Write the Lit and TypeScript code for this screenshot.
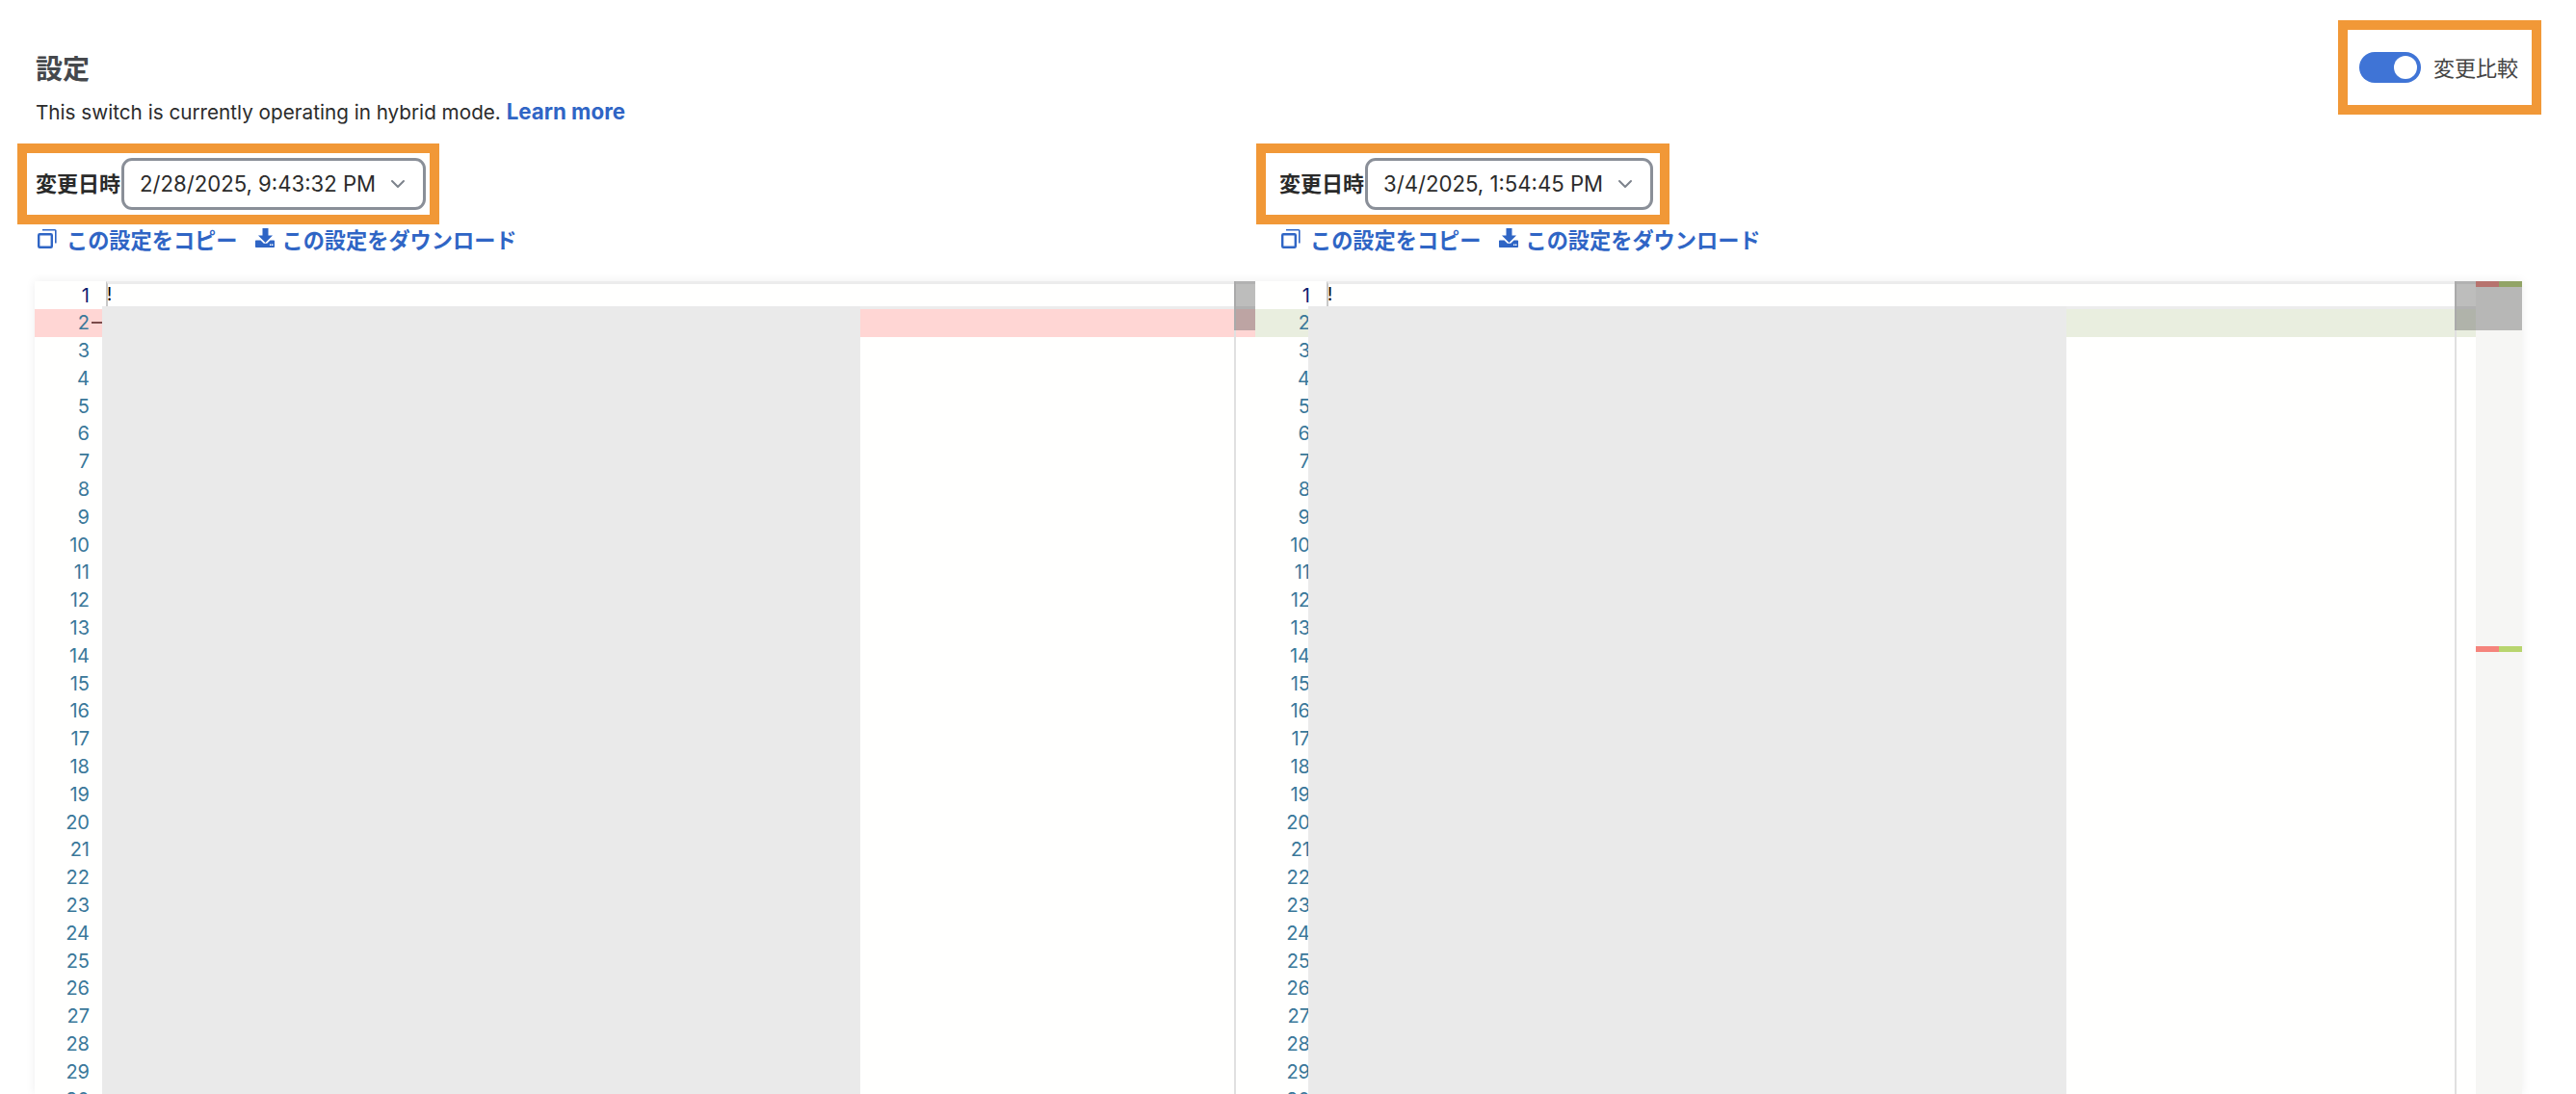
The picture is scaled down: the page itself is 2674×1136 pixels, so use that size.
import { LitElement, html, css, svg } from "lit";
import { customElement } from "lit/decorators.js";

const LINES = Array.from({ length: 30 }, (_, i) => i + 1);

const copyIcon = svg`<svg class="ico copy" width="20" height="20" viewBox="0 0 20 20" fill="none" stroke="currentColor">
  <rect x="1.2" y="5.2" width="13.6" height="13.6" rx="1" stroke-width="2.4"/>
  <path d="M5 .8h13a.8.8 0 0 1 .8.8v13" stroke-width="1.6"/>
</svg>`;

const downloadIcon = svg`<svg class="ico" width="20" height="20" viewBox="0 0 20 20" fill="currentColor">
  <path d="M7.500 0h6v7.500h4.500L10.500 15 3 7.500h4.500z"/>
  <path fill-rule="evenodd" d="M.8 12.500h4.700l3.300 3.300h3.400l3.300-3.300h3.700a.8.8 0 0 1 .8.8v5.900a.8.8 0 0 1-.8.8H.8a.8.8 0 0 1-.8-.8v-5.900a.8.8 0 0 1 .8-.8zM15 16.600h1.400V18H15zM17 16.600h1.400V18H17z"/>
</svg>`;

const chevron = svg`<svg class="chev" width="16" height="10" viewBox="0 0 16 10" fill="none" stroke="#7d838c" stroke-width="2" stroke-linecap="round" stroke-linejoin="round">
  <path d="M2 2l6 6 6-6"/>
</svg>`;

@customElement("app-root")
export class AppRoot extends LitElement {
  static styles = css`
    :host {
      display: block;
      height: 1136px;
      overflow: hidden;
      background: #fff;
      font-family: Inter, "Noto Sans CJK JP", sans-serif;
      color: #222;
    }
    .head {
      display: flex;
      justify-content: space-between;
      align-items: flex-start;
      padding: 21px 36px 0 37px;
      height: 149px;
      box-sizing: border-box;
    }
    .titles { display: flex; flex-direction: column; padding-top: 31px; }
    h1 {
      margin: 0;
      font-size: 28px;
      line-height: 40px;
      font-weight: 600;
      color: #45484c;
    }
    .sub { margin: 9px 0 0; font-size: 20.7px; line-height: 30px; color: #2b2b2b; }
    .sub a { color: #2f65c5; font-weight: 700; font-size: 22.3px; text-decoration: none; }
    .toggle-box {
      box-sizing: border-box;
      width: 211px;
      height: 98px;
      border: 10px solid #f19837;
      display: flex;
      align-items: center;
      gap: 13px;
      padding-left: 12px;
    }
    .toggle {
      width: 64px;
      height: 32px;
      border-radius: 16px;
      background: #3f74d6;
      display: flex;
      align-items: center;
      justify-content: flex-end;
      padding: 4px;
      box-sizing: border-box;
    }
    .knob { width: 24px; height: 24px; border-radius: 50%; background: #fff; }
    .toggle-label { font-size: 22px; line-height: 30px; color: #444; padding-top: 2px; }

    .controls {
      display: grid;
      grid-template-columns: 1285px 1fr;
      padding-left: 18px;
    }
    .col { display: flex; flex-direction: column; align-items: flex-start; }
    .box {
      box-sizing: border-box;
      height: 84px;
      border: 10px solid #f19837;
      display: flex;
      align-items: center;
      padding: 0 4px 0 9px;
    }
    .col.right .box { margin-left: 1px; padding: 0 7px 0 14px; }
    .label { font-size: 22px; line-height: 30px; font-weight: 600; color: #2a2a2a; width: 89px; white-space: nowrap; }
    .select {
      box-sizing: border-box;
      height: 54px;
      border: 3px solid #8a8f98;
      border-radius: 11px;
      display: flex;
      align-items: center;
      gap: 15px;
      padding: 0 18px 0 16px;
      font-size: 22.15px;
      color: #2b2b2b;
      background: #fff;
      white-space: nowrap;
    }
    .links {
      display: flex;
      align-items: center;
      gap: 18px;
      height: 30px;
      margin: 0 0 29px 21px;
      color: #2f65c5;
      font-size: 22.2px;
      font-weight: 600;
    }
    .col.right .links { margin-left: 27px; }
    .link { display: flex; align-items: center; gap: 10px; white-space: nowrap; }
    .link.dl { gap: 8px; }
    .ico { display: block; flex: none; margin-top: -2px; }
    .ico.copy { margin-top: 0; }
    .chev { display: block; flex: none; }

    .diff {
      display: flex;
      margin-left: 36px;
      width: 2582px;
      height: 844px;
      box-shadow: 0 0 10px rgba(0, 0, 0, 0.07);
      background: #fffffe;
    }
    .editor {
      position: relative;
      width: 1267px;
      flex: none;
      overflow: hidden;
      background: #fffffe;
    }
    .row {
      display: flex;
      height: 28.8px;
      align-items: center;
    }
    .num {
      flex: none;
      width: 57px;
      text-align: right;
      font-size: 20px;
      line-height: 28.8px;
      padding-top: 1px;
      color: #3a789a;
      white-space: nowrap;
    }
    .row.first .num { color: #0b216f; }
    .row.del { background: #ffd6d4; }
    .row.add { background: #e9eedf; }
    .minus { width: 11px; height: 2px; margin-left: 2px; background: #7a4a4a; flex: none; }
    .code {
      align-self: stretch;
      flex: 1;
      margin-left: 17px;
      box-sizing: border-box;
      border-top: 3px solid #ececec;
      border-bottom: 3px solid #ececec;
      border-left: 2px solid #c8c8c8;
      font-size: 18px;
      line-height: 22px;
      text-indent: -1px;
      color: #000;
    }
    .redact { position: absolute; top: 26px; bottom: 0; background: #eaeaea; }
    .editor.a .redact { left: 70px; width: 787px; }
    .editor.b .redact { left: 55px; width: 787px; }
    .track { position: absolute; top: 0; right: 0; bottom: 0; width: 22px; border-left: 2px solid #e0e0e0; box-sizing: border-box; }
    .slider { position: absolute; top: 0; right: 0; width: 22px; height: 51px; background: rgba(90, 90, 90, 0.4); }
    .ruler { position: relative; flex: none; width: 48px; background: #f6f6f4; }
    .mark { position: absolute; width: 24px; height: 6px; }
    .mark.r { left: 0; background: #f5847c; }
    .mark.g { left: 24px; background: #b8d56e; }
    .mark.top { top: 0; }
    .mark.mid { top: 379px; }
    .ruler .slider { width: 48px; }
  `;

  private editor(side: "a" | "b") {
    return html`<div class="editor ${side}">
      ${LINES.map((n) => {
        const band = n === 2 ? (side === "a" ? "del" : "add") : "";
        return html`<div class="row ${band} ${n === 1 ? "first" : ""}">
          <span class="num">${n}</span>
          ${n === 1 ? html`<span class="code">!</span>` : ""}
          ${n === 2 && side === "a" ? html`<span class="minus"></span>` : ""}
        </div>`;
      })}
      <div class="redact"></div>
      <div class="track"></div>
      <div class="slider"></div>
    </div>`;
  }

  private control(side: "left" | "right", date: string) {
    return html`<div class="col ${side}">
      <div class="box">
        <span class="label">変更日時</span>
        <div class="select"><span>${date}</span>${chevron}</div>
      </div>
      <div class="links">
        <span class="link">${copyIcon}<span>この設定をコピー</span></span>
        <span class="link dl">${downloadIcon}<span>この設定をダウンロード</span></span>
      </div>
    </div>`;
  }

  render() {
    return html`
      <div class="head">
        <div class="titles">
          <h1>設定</h1>
          <p class="sub">This switch is currently operating in hybrid mode. <a>Learn more</a></p>
        </div>
        <div class="toggle-box">
          <div class="toggle"><div class="knob"></div></div>
          <span class="toggle-label">変更比較</span>
        </div>
      </div>
      <div class="controls">
        ${this.control("left", "2/28/2025, 9:43:32 PM")}
        ${this.control("right", "3/4/2025, 1:54:45 PM")}
      </div>
      <div class="diff">
        ${this.editor("a")}
        ${this.editor("b")}
        <div class="ruler">
          <div class="mark r mid"></div>
          <div class="mark g mid"></div>
          <div class="mark r top"></div>
          <div class="mark g top"></div>
          <div class="slider"></div>
        </div>
      </div>
    `;
  }
}
